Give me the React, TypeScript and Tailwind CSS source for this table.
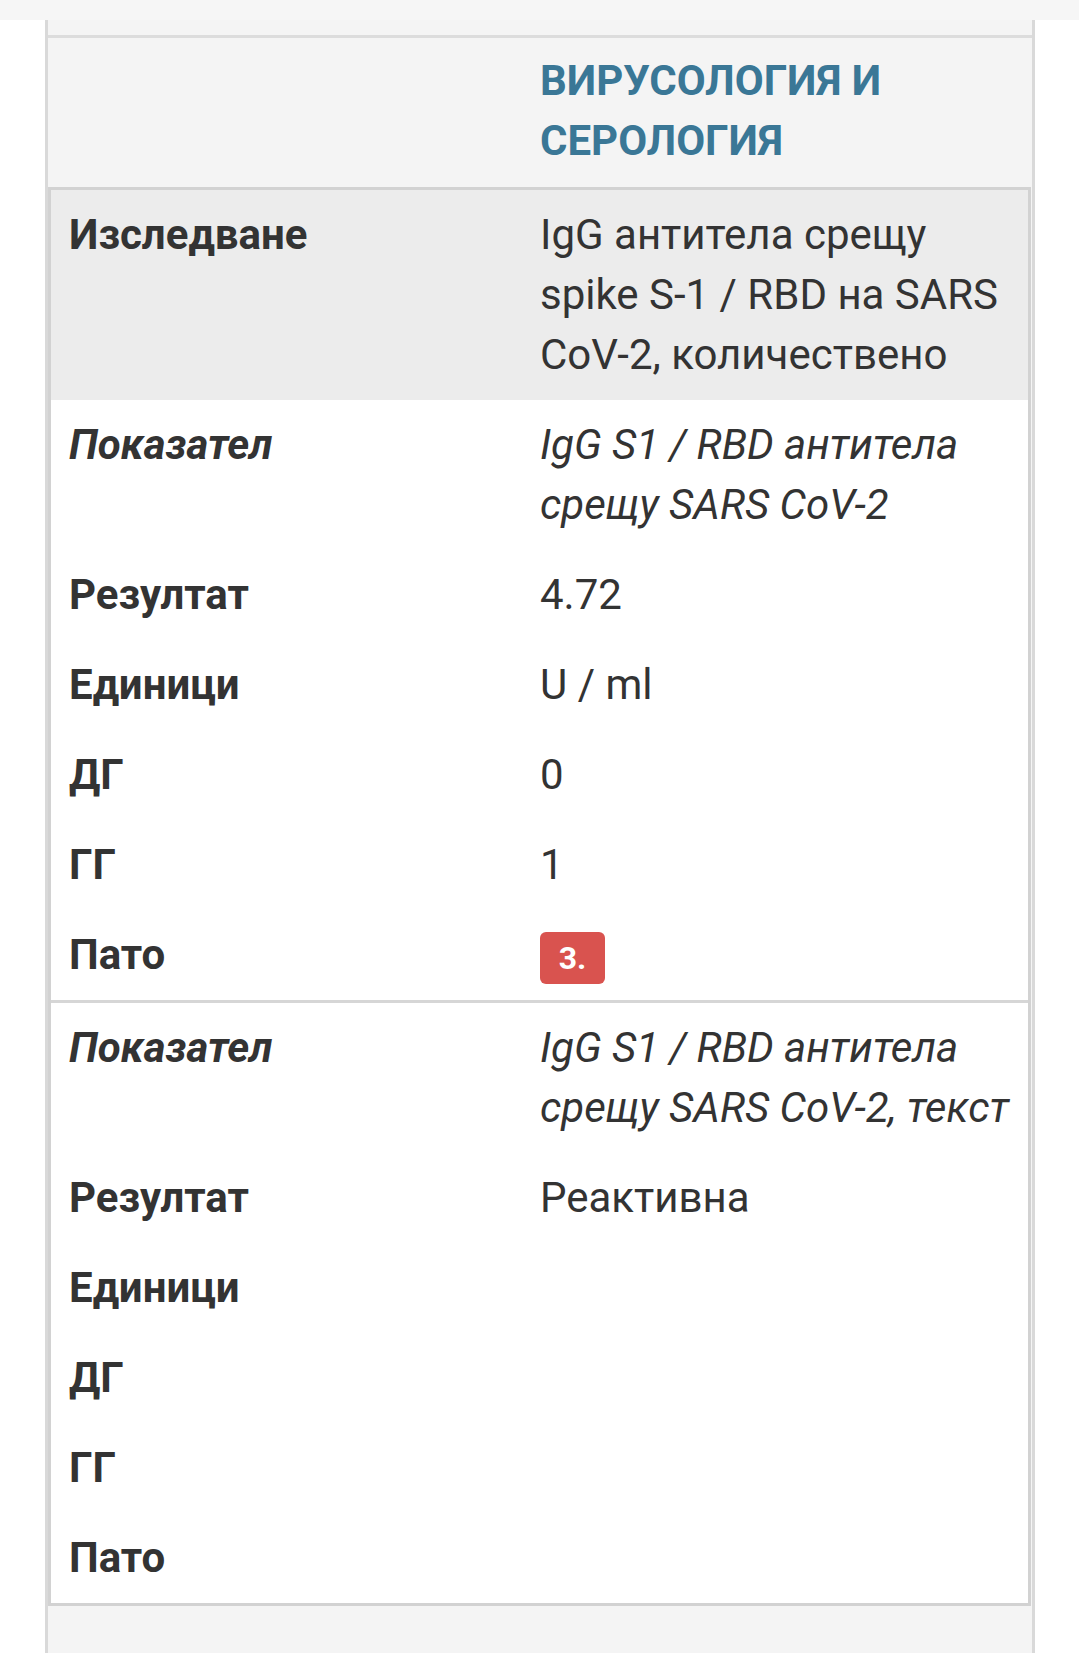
type Row = { label: string; value?: React.ReactNode; italic?: boolean };

const group1: Row[] = [
  {
    label: 'Показател',
    value: (
      <>
        IgG S1 / RBD антитела
        <br />
        срещу SARS CoV-2
      </>
    ),
    italic: true,
  },
  { label: 'Резултат', value: '4.72' },
  { label: 'Единици', value: 'U / ml' },
  { label: 'ДГ', value: '0' },
  { label: 'ГГ', value: '1' },
  {
    label: 'Пато',
    value: (
      <span className="inline-flex h-[52px] w-[65px] items-center justify-center rounded-[6px] bg-[#d9534f] align-middle text-[32px] font-bold leading-none text-white">
        3.
      </span>
    ),
  },
];

const group2: Row[] = [
  {
    label: 'Показател',
    value: (
      <>
        IgG S1 / RBD антитела
        <br />
        срещу SARS CoV-2, текст
      </>
    ),
    italic: true,
  },
  { label: 'Резултат', value: 'Реактивна' },
  { label: 'Единици' },
  { label: 'ДГ' },
  { label: 'ГГ' },
  { label: 'Пато' },
];

function DataRow({ row }: { row: Row }) {
  return (
    <div className="grid grid-cols-[489px_1fr] py-[15px] leading-[60px]">
      <div className={`pl-[18px] font-bold ${row.italic ? 'italic' : ''}`}>{row.label}</div>
      <div className={`pr-4 ${row.italic ? 'italic' : ''}`}>{row.value}</div>
    </div>
  );
}

export default function App() {
  return (
    <div
      className="h-[1653px] overflow-hidden bg-white text-[42px] text-[#333]"
      style={{ fontFamily: 'Roboto, "Noto Sans", sans-serif' }}
    >
      <div className="h-5 bg-[#f6f6f6]" />

      <div className="ml-[45px] mr-[44px] border-x-[3px] border-[#d9d9d9] bg-[#f4f4f4]">
        <div className="h-[15px]" />
        <div className="border-t-[3px] border-[#dcdcdc] pb-[16px] pt-[13px]">
          <div className="pl-[492px] text-[42px] font-bold leading-[60px] text-[#3a7796]">
            ВИРУСОЛОГИЯ И
            <br />
            СЕРОЛОГИЯ
          </div>
        </div>

        <div className="mr-px border-[3px] border-[#d2d2d2] bg-white">
          <div className="grid grid-cols-[489px_1fr] bg-[#ececec] py-[15px] leading-[60px]">
            <div className="pl-[18px] font-bold">Изследване</div>
            <div className="pr-4">
              IgG антитела срещу
              <br />
              spike S-1 / RBD на SARS
              <br />
              CoV-2, количествено
            </div>
          </div>

          <div className="border-b-[3px] border-[#d6d6d6]">
            {group1.map((row, i) => (
              <DataRow key={i} row={row} />
            ))}
          </div>

          <div>
            {group2.map((row, i) => (
              <DataRow key={i} row={row} />
            ))}
          </div>
        </div>

        <div className="h-[80px]" />
      </div>
    </div>
  );
}
